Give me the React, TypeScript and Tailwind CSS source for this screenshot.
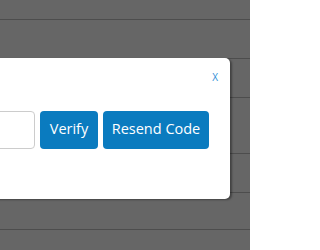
import React from "react";

export default function App() {
  const font = { fontFamily: '"Open Sans", "Noto Sans", sans-serif' };
  return (
    <div className="relative w-[250px] h-[250px] overflow-hidden bg-[#666666]" style={font}>
      <div className="flex flex-col">
        <div className="h-[20px] border-b-[1.5px] border-[#4d4d4d]" />
        <div className="h-[39px] border-b-[1.5px] border-[#4d4d4d]" />
        <div className="h-[39px] border-b-[1.5px] border-[#4d4d4d]" />
        <div className="h-[56px] border-b-[1.5px] border-[#4d4d4d]" />
        <div className="h-[39px] border-b-[1.5px] border-[#4d4d4d]" />
        <div className="h-[37px] border-b-[1.5px] border-[#4d4d4d]" />
      </div>
      <div className="absolute left-[-200px] top-[58px] w-[430px] h-[141px] rounded-[5px] bg-white shadow-[2px_1px_2px_rgba(0,0,0,0.35)] flex flex-col">
        <div className="flex justify-end pr-[12px] pt-[10px] h-[53px]">
          <span className="text-[10px] leading-none text-[#2f8fd6] mt-[4px]">X</span>
        </div>
        <div className="flex items-center gap-[5px] pr-[21px] justify-end">
          <div className="w-[235px] h-[38px] rounded-[4px] border border-[#cccccc] bg-white" />
          <button className="w-[58px] h-[38px] rounded-[4px] bg-[#0a7bbf] text-white text-[14.5px] leading-none pb-[1px]">
            Verify
          </button>
          <button className="w-[106px] h-[38px] rounded-[4px] bg-[#0a7bbf] text-white text-[14.5px] leading-none pb-[1px]">
            Resend Code
          </button>
        </div>
      </div>
    </div>
  );
}
